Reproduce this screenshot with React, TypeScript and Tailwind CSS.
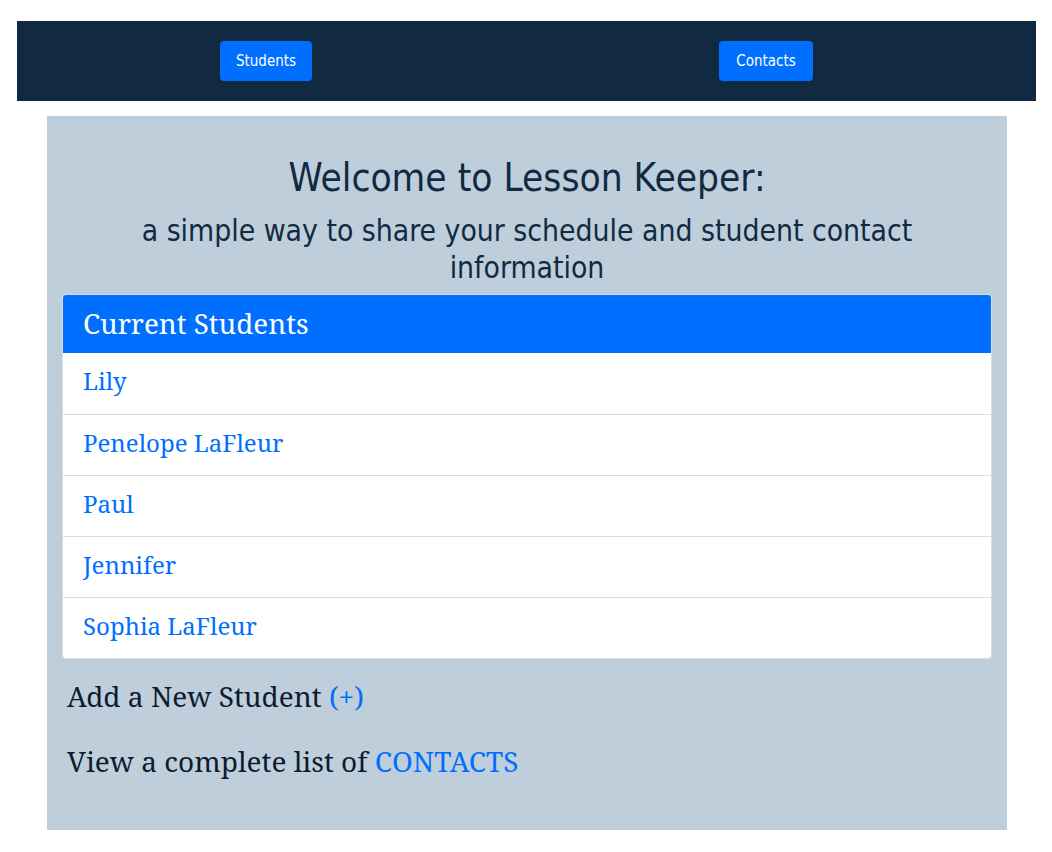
const students = ["Lily", "Penelope LaFleur", "Paul", "Jennifer", "Sophia LaFleur"];

const serif = "font-['Noto_Serif','DejaVu_Serif',serif]";
const display = "font-['DejaVu_Sans_Condensed','DejaVu_Serif_Condensed',sans-serif]";

export default function App() {
  return (
    <div className="min-h-[852px] bg-white pl-[17px] pr-[16px] pt-[21px] pb-[22px]">
      <nav className="flex h-20 items-center bg-[#112a42]">
        <div className="flex w-[498px] justify-center">
          <button className="h-10 w-[92px] rounded-[4px] bg-[#006fff] pt-px font-['Liberation_Sans_Narrow','DejaVu_Sans_Condensed',sans-serif] text-[15px] text-white">
            Students
          </button>
        </div>
        <div className="flex w-[502px] justify-center">
          <button className="h-10 w-[94px] rounded-[4px] bg-[#006fff] pt-px font-['Liberation_Sans_Narrow','DejaVu_Sans_Condensed',sans-serif] text-[15px] text-white">
            Contacts
          </button>
        </div>
      </nav>

      <main className="ml-[30px] mt-[15px] h-[714px] w-[960px] bg-[#bfcedb] px-[15px] pt-[38px] text-[#112a42]">
        <h1 className={`text-center text-[38.5px] leading-[48px] ${display}`}>Welcome to Lesson Keeper:</h1>
        <p className={`mx-auto mt-[10px] max-w-[820px] text-center text-[29.8px] leading-[37px] ${display}`}>
          a simple way to share your schedule and student contact information
        </p>

        <div className="mt-[8px] overflow-hidden rounded-[4px] border border-[#dcdcdc] bg-white">
          <div className={`flex h-[58px] items-center bg-[#006fff] px-5 text-[27.8px] text-white ${serif}`}>
            Current Students
          </div>
          {students.map((s, i) => (
            <div
              key={s}
              className={`flex h-[61px] items-center px-5 pb-[5px] text-[24px] text-[#006fff] ${serif} ${
                i > 0 ? "border-t border-[#dcdcdc]" : ""
              }`}
            >
              {s}
            </div>
          ))}
        </div>

        <p className={`mt-[18px] pl-[5px] text-[28px] leading-[38px] text-[#0d1b2e] ${serif}`}>
          Add a New Student <span className="text-[#006fff]">(+)</span>
        </p>
        <p className={`mt-[27px] pl-[5px] text-[28px] leading-[38px] text-[#0d1b2e] ${serif}`}>
          View a complete list of <span className="text-[#006fff]">CONTACTS</span>
        </p>
      </main>
    </div>
  );
}
